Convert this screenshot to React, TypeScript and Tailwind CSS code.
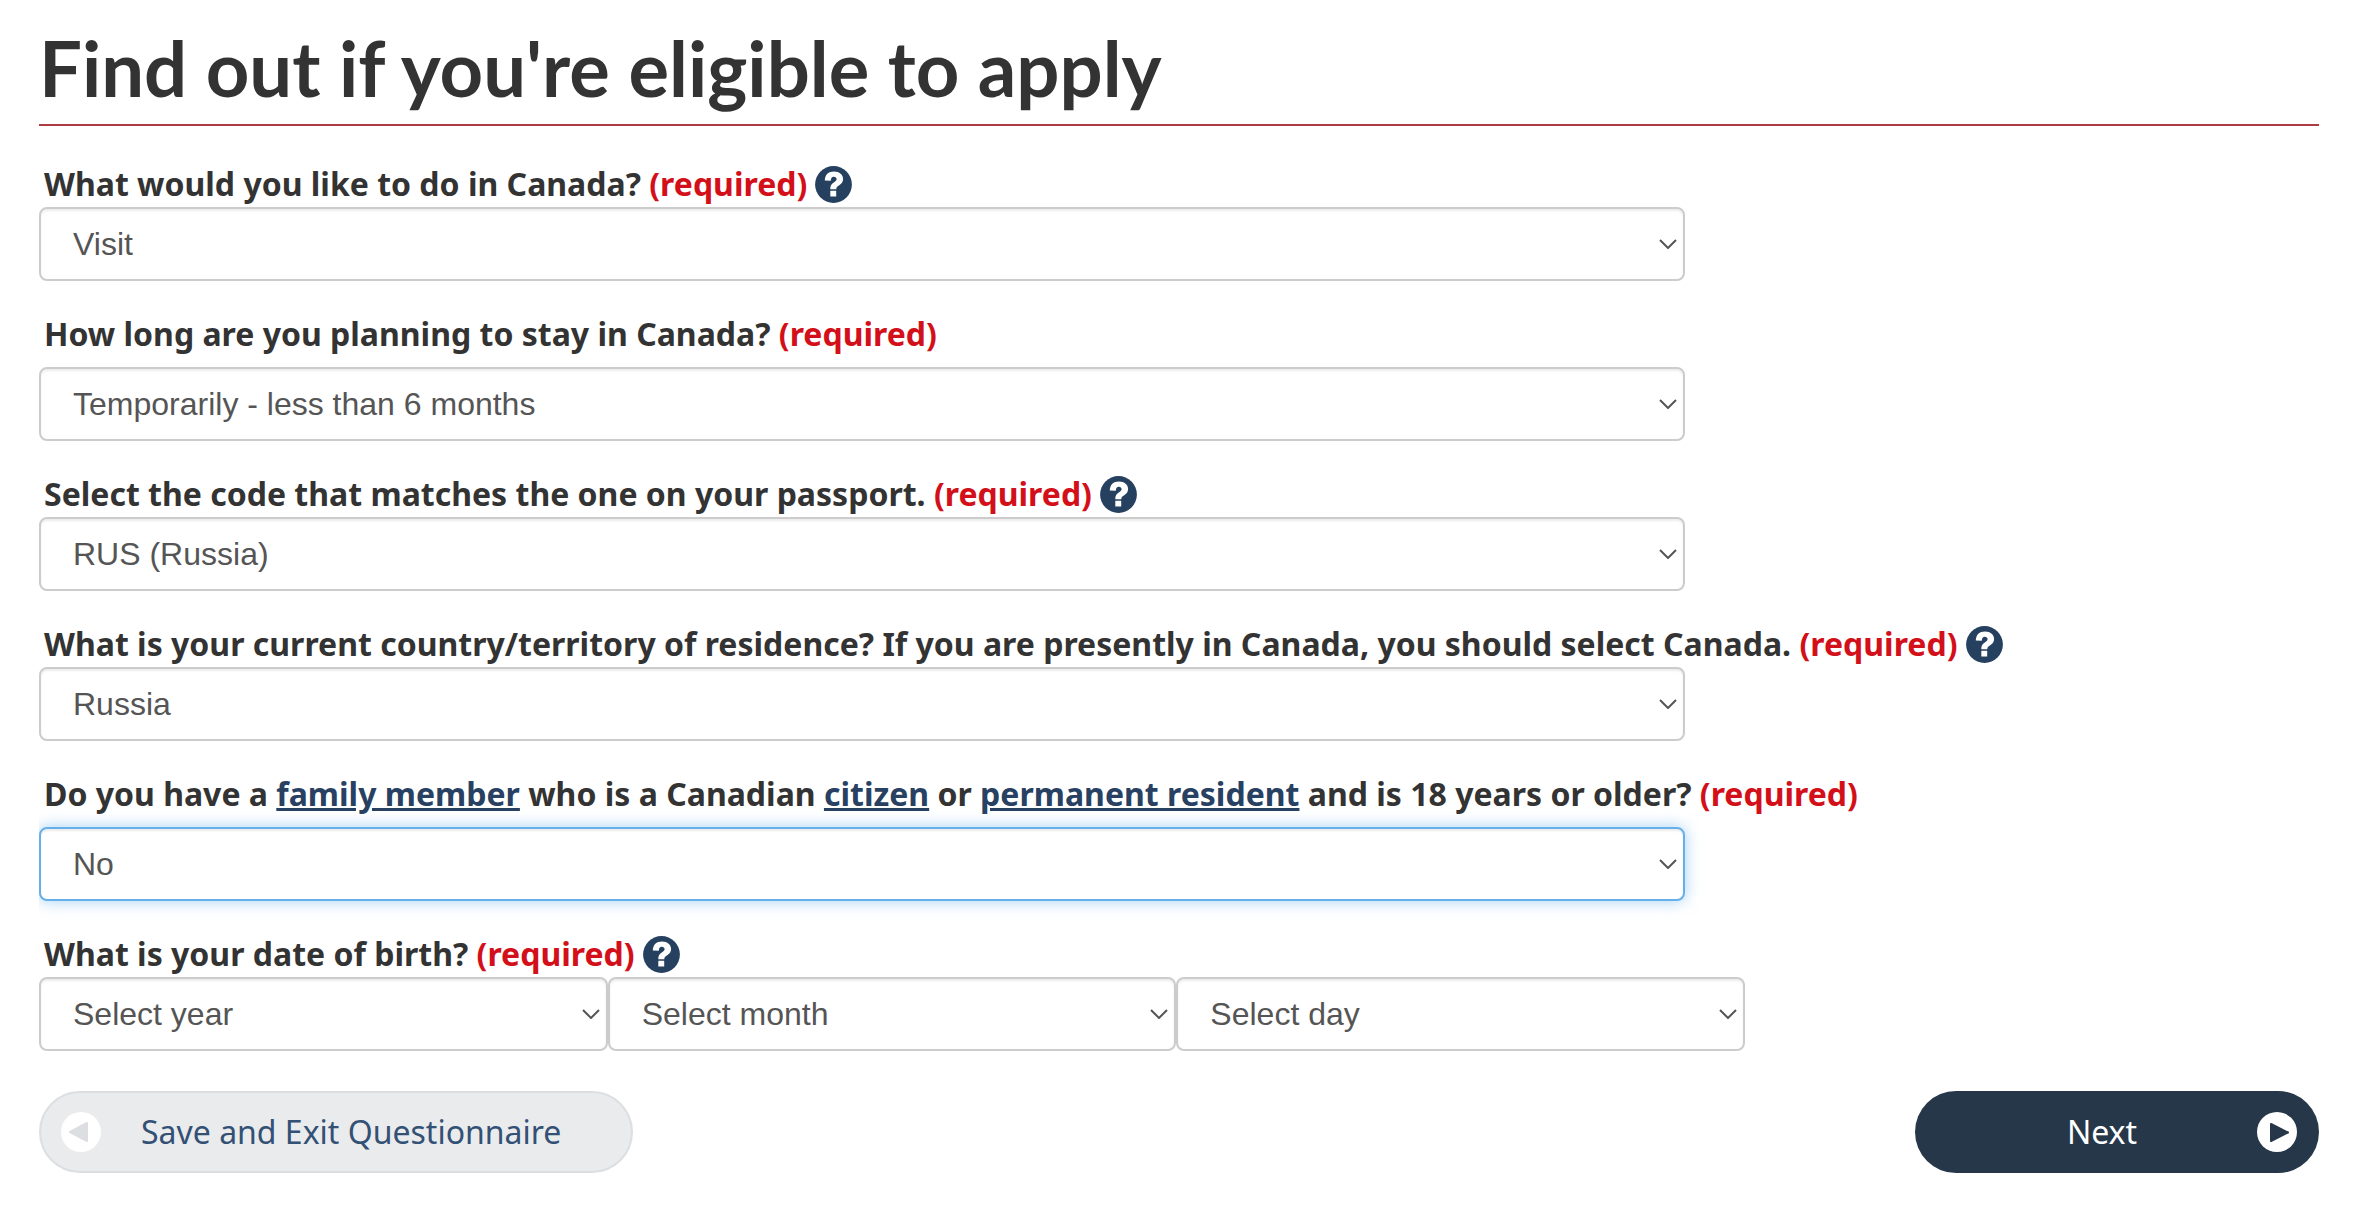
import { ReactNode, useState } from "react";

type FieldProps = {
  id: string;
  label: ReactNode;
  help?: boolean;
  children: ReactNode;
};

type SelectProps = {
  id?: string;
  label?: string;
  options: string[];
  focused?: boolean;
};

function HelpIcon() {
  return (
    <svg viewBox="0 0 37 37" className="h-[37px] w-[37px]" aria-hidden="true">
      <circle cx="18.5" cy="18.5" r="18.4" fill="#26405f" />
      <path
        d="M9.8 14.4C9.900 8.800 13.400 5.500 19 5.500C24.500 5.500 28.100 8.700 28.100 13C28.100 16 26.500 17.600 24.200 19.300C22 20.800 21.300 21.400 21.300 23.300H15.300C15.200 19.900 16.200 18.300 18.800 16.500C20.800 15.200 21.600 14.500 21.600 13.100C21.600 11.600 20.500 10.700 18.800 10.700C16.900 10.700 15.900 11.900 15.800 14.700Z"
        fill="#fff"
      />
      <rect x="15.3" y="24.8" width="5.9" height="5.8" rx="0.3" fill="#fff" />
    </svg>
  );
}

function Select({ id, label, options, focused }: SelectProps) {
  const [value, setValue] = useState(options[0]);

  return (
    <div className="relative flex-1">
      <select
        id={id}
        aria-label={label}
        value={value}
        onChange={(e) => setValue(e.target.value)}
        className={
          focused
            ? "h-[74px] w-full appearance-none rounded-lg border-2 border-[#66afe9] bg-white px-8 font-['Liberation_Sans',sans-serif] text-[32px] text-[#555] shadow-[inset_0_2px_2px_rgba(0,0,0,0.075),0_0_16px_rgba(102,175,233,0.6)] outline-none [clip-path:inset(-20px_-20px_-20px_0)]"
            : "h-[74px] w-full appearance-none rounded-lg border-2 border-[#ccc] bg-white px-8 font-['Liberation_Sans',sans-serif] text-[32px] text-[#555] shadow-[inset_0_2px_2px_rgba(0,0,0,0.075)] outline-none"
        }
      >
        {options.map((option) => (
          <option key={option}>{option}</option>
        ))}
      </select>
      <svg
        viewBox="0 0 18 10"
        className="pointer-events-none absolute top-8 right-2 h-[10px] w-[18px]"
        fill="none"
        stroke="#555"
        strokeWidth="2"
        aria-hidden="true"
      >
        <path d="M1 1L9 9L17 1" />
      </svg>
    </div>
  );
}

function Field({ id, label, help, children }: FieldProps) {
  return (
    <div className="mb-[30px]">
      <div className={help ? "flex items-center gap-2 pl-[5px]" : "mb-[10px] flex items-center gap-2 pl-[5px]"}>
        <label htmlFor={id} className="text-[32px] leading-[46px] font-bold">
          {label} <span className="text-[#d3101a]">(required)</span>
        </label>
        {help && (
          <button type="button" aria-label="Help">
            <HelpIcon />
          </button>
        )}
      </div>
      {children}
    </div>
  );
}

function TermLink({ children }: { children: ReactNode }) {
  return (
    <a href="#" className="text-[#284162] underline">
      {children}
    </a>
  );
}

export default function App() {
  return (
    <main className="min-h-screen bg-white pt-[22px] pr-[51px] pl-[39px] font-['Noto_Sans',sans-serif] text-[#333]">
      <h1 className="mb-[35px] border-b-2 border-[#af3c43] pb-[10px] font-['Lato',sans-serif] text-[76px] leading-[92px] font-bold">
        Find out if you're eligible to apply
      </h1>

      <form onSubmit={(e) => e.preventDefault()}>
        <Field id="purpose" label="What would you like to do in Canada?" help>
          <div className="flex max-w-[1646px]">
            <Select id="purpose" options={["Visit", "Study", "Work"]} />
          </div>
        </Field>

        <Field id="duration" label="How long are you planning to stay in Canada?">
          <div className="flex max-w-[1646px]">
            <Select id="duration" options={["Temporarily - less than 6 months", "Temporarily - more than 6 months"]} />
          </div>
        </Field>

        <Field id="passport" label="Select the code that matches the one on your passport." help>
          <div className="flex max-w-[1646px]">
            <Select id="passport" options={["RUS (Russia)"]} />
          </div>
        </Field>

        <Field
          id="residence"
          label="What is your current country/territory of residence? If you are presently in Canada, you should select Canada."
          help
        >
          <div className="flex max-w-[1646px]">
            <Select id="residence" options={["Russia", "Canada"]} />
          </div>
        </Field>

        <Field
          id="family"
          label={
            <>
              Do you have a <TermLink>family member</TermLink> who is a Canadian <TermLink>citizen</TermLink> or{" "}
              <TermLink>permanent resident</TermLink> and is 18 years or older?
            </>
          }
        >
          <div className="flex max-w-[1646px]">
            <Select id="family" options={["No", "Yes"]} focused />
          </div>
        </Field>

        <Field id="birth-year" label="What is your date of birth?" help>
          <div className="flex max-w-[1706px]">
            <Select id="birth-year" options={["Select year"]} />
            <Select label="Month of birth" options={["Select month"]} />
            <Select label="Day of birth" options={["Select day"]} />
          </div>
        </Field>

        <div className="mt-10 flex justify-between text-[32px]">
          <button
            type="button"
            className="flex h-[82px] items-center gap-10 rounded-full border-2 border-[#dcdee1] bg-[#eaebed] pr-[70px] pl-5 text-[#335075]"
          >
            <svg viewBox="0 0 40 40" className="h-10 w-10" aria-hidden="true">
              <circle cx="20" cy="20" r="20" fill="#fff" />
              <path d="M9 20L26 11V29Z" fill="#dcdee1" stroke="#dcdee1" strokeWidth="2" strokeLinejoin="round" />
            </svg>
            Save and Exit Questionnaire
          </button>
          <button
            type="submit"
            className="flex h-[82px] w-[404px] items-center rounded-full bg-[#26374a] pr-[22px] pl-8 text-white"
          >
            <span className="flex-1">Next</span>
            <svg viewBox="0 0 40 40" className="h-10 w-10" aria-hidden="true">
              <circle cx="20" cy="20" r="20" fill="#fff" />
              <path d="M14 12L31 20.5L14 29Z" fill="#26374a" stroke="#26374a" strokeWidth="2" strokeLinejoin="round" />
            </svg>
          </button>
        </div>
      </form>
    </main>
  );
}
